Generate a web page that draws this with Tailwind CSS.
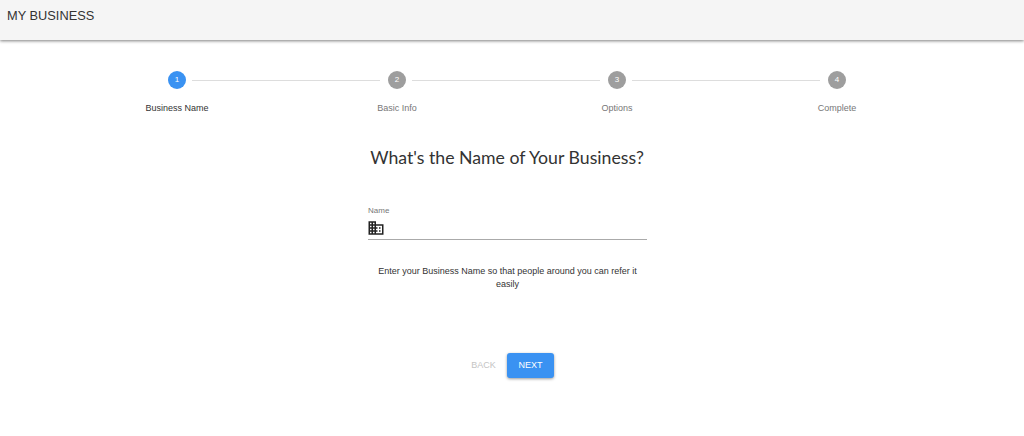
<!DOCTYPE html>
<html lang="en">
<head>
    <meta charset="UTF-8">
    <meta name="viewport" content="width=device-width, initial-scale=1.0">
    <title>My Business</title>
    <script src="https://cdn.jsdelivr.net/npm/@tailwindcss/browser@4"></script>
</head>
<body class="bg-white min-h-screen overflow-hidden font-['Liberation_Sans',Arial,sans-serif]">
    <header class="h-10 bg-[#f5f5f5] shadow-[0_1px_3px_rgba(0,0,0,0.5)] px-[7px] pt-[7px]">
        <h1 class="text-[12.8px] leading-[18px] text-[#333]">MY BUSINESS</h1>
    </header>

    <main class="pr-[10px]">
        <!-- stepper -->
        <div class="w-[880px] mx-auto pt-[31px]">
            <div class="flex items-center px-[101px]">
                <div class="w-[18px] h-[18px] rounded-full bg-[#3a92f2] text-white text-[8px] flex items-center justify-center shrink-0">1</div>
                <div class="flex-1 h-px bg-[#ddd] ml-[6px] mr-[8px]"></div>
                <div class="w-[18px] h-[18px] rounded-full bg-[#9e9e9e] text-white text-[8px] flex items-center justify-center shrink-0">2</div>
                <div class="flex-1 h-px bg-[#ddd] ml-[6px] mr-[8px]"></div>
                <div class="w-[18px] h-[18px] rounded-full bg-[#9e9e9e] text-white text-[8px] flex items-center justify-center shrink-0">3</div>
                <div class="flex-1 h-px bg-[#ddd] ml-[6px] mr-[8px]"></div>
                <div class="w-[18px] h-[18px] rounded-full bg-[#9e9e9e] text-white text-[8px] flex items-center justify-center shrink-0">4</div>
            </div>
            <div class="grid grid-cols-4 mt-[12px] text-center text-[9px] leading-[14px] text-[#777]">
                <div class="text-[#333]">Business Name</div>
                <div>Basic Info</div>
                <div>Options</div>
                <div>Complete</div>
            </div>
        </div>

        <h2 class="mt-[30px] text-center text-[17.7px] leading-[26px] text-[#333] font-['Lato',sans-serif]">What's the Name of Your Business?</h2>

        <!-- name field -->
        <div class="w-[279px] ml-[368px] mt-[35px]">
            <label class="block text-[8px] leading-[10px] text-[#777]">Name</label>
            <div class="flex items-start h-[21px] mt-[3px] border-b border-[#aaa]">
                <svg class="w-[18px] h-[18px] -ml-[1px]" viewBox="0 0 24 24" fill="#222"><path d="M12 7V3H2v18h20V7H12zM6 19H4v-2h2v2zm0-4H4v-2h2v2zm0-4H4V9h2v2zm0-4H4V5h2v2zm4 12H8v-2h2v2zm0-4H8v-2h2v2zm0-4H8V9h2v2zm0-4H8V5h2v2zm10 12h-8v-2h2v-2h-2v-2h2v-2h-2V9h8v10zm-2-8h-2v2h2v-2zm0 4h-2v2h2v-2z"/></svg>
            </div>
            <p class="mt-[25px] text-center text-[9px] leading-[13px] text-[#333]">Enter your Business Name so that people around you can refer it easily</p>
        </div>

        <!-- actions -->
        <div class="flex justify-center items-center mt-[62px]">
            <button class="w-[47px] h-[25px] text-[9px] text-[#c4c4c4]">BACK</button>
            <button class="w-[47px] h-[25px] rounded-[3px] bg-[#3a92f2] text-white text-[9px] shadow-[0_1px_3px_rgba(0,0,0,0.4)]">NEXT</button>
        </div>
    </main>
</body>
</html>
